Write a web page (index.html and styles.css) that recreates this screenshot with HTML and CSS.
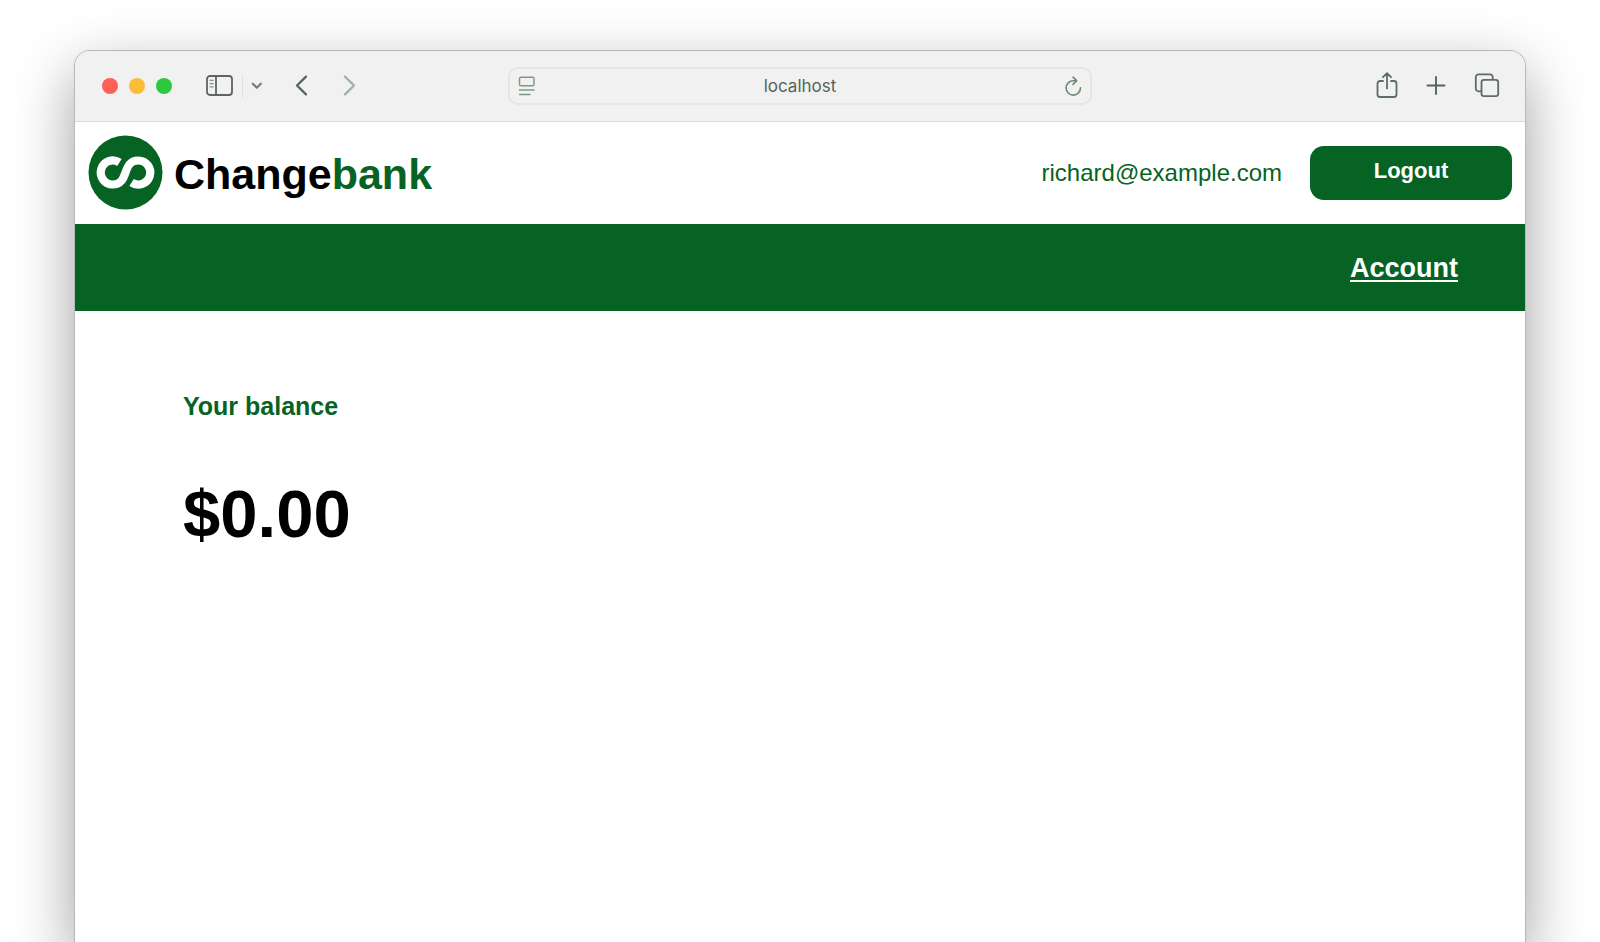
FILE: index.html
```html
<!DOCTYPE html>
<html lang="en">
<head>
<meta charset="utf-8">
<title>Changebank</title>
<meta name="viewport" content="width=device-width, initial-scale=1">
<link rel="stylesheet" href="styles.css">
</head>
<body>
<div class="browser">
  <div class="toolbar">
    <div class="toolbar-left">
      <div class="lights">
        <button class="light light-close" aria-label="Close"></button>
        <button class="light light-minimize" aria-label="Minimize"></button>
        <button class="light light-zoom" aria-label="Zoom"></button>
      </div>
      <div class="sidebar-group">
        <button class="tool" aria-label="Sidebar">
          <svg width="28" height="22" viewBox="0 0 28 22" fill="none" stroke="#5b665d" stroke-width="1.8"><rect x="1" y="1" width="25" height="19" rx="3"/><path d="M10 1v19"/><path d="M3.600 5.400h4M3.600 8.600h4M3.600 11.800h4" stroke="#7f9183" stroke-width="1.3"/></svg>
        </button>
        <span class="divider"></span>
        <button class="tool" aria-label="Sidebar menu">
          <svg width="12" height="8" viewBox="0 0 12 8" fill="none" stroke="#6f8273" stroke-width="2.200" stroke-linecap="round" stroke-linejoin="round"><path d="M1.800 1.700l4 4 4-4"/></svg>
        </button>
      </div>
      <div class="history">
        <button class="tool" aria-label="Back">
          <svg width="13" height="22" viewBox="0 0 13 22" fill="none" stroke="#56635a" stroke-width="2.200" stroke-linecap="round" stroke-linejoin="round"><path d="M11 1.600L2 10.500l9 8.900"/></svg>
        </button>
        <button class="tool" aria-label="Forward">
          <svg width="13" height="22" viewBox="0 0 13 22" fill="none" stroke="#9db3a1" stroke-width="2.200" stroke-linecap="round" stroke-linejoin="round"><path d="M2 1.600l9 8.900-9 8.900"/></svg>
        </button>
      </div>
    </div>
    <div class="address">
      <button class="tool" aria-label="Page menu">
        <svg width="18" height="20" viewBox="0 0 18 20" fill="none" stroke="#7f9884" stroke-width="1.500" stroke-linecap="round"><rect x="1.500" y="1.200" width="14.500" height="8.600" rx="1.600"/><path d="M1.500 14h14.500M1.500 18.500h10.500"/></svg>
      </button>
      <input class="address-input" type="text" value="localhost" aria-label="Address">
      <button class="tool" aria-label="Reload">
        <svg width="18" height="20" viewBox="0 0 18 20" fill="none" stroke="#6f8a75" stroke-width="1.600" stroke-linecap="round" stroke-linejoin="round"><path d="M16.500 11.800A7.200 7.200 0 1 1 9.300 4.700h3.200M9 1.200l3.700 3.500L9 8.400"/></svg>
      </button>
    </div>
    <div class="toolbar-right">
      <button class="tool" aria-label="Share">
        <svg width="22" height="28" viewBox="0 0 22 28" fill="none" stroke="#5b6e60" stroke-width="1.800" stroke-linecap="round" stroke-linejoin="round"><path d="M7 9H4a2.500 2.500 0 0 0-2.500 2.500v11A2.500 2.500 0 0 0 4 25h14a2.500 2.500 0 0 0 2.500-2.500v-11A2.500 2.500 0 0 0 18 9h-3M11 16.500v-15M7 5.200L11 1.200l4 4"/></svg>
      </button>
      <button class="tool" aria-label="New tab">
        <svg width="20" height="20" viewBox="0 0 20 20" fill="none" stroke="#56635a" stroke-width="1.900" stroke-linecap="round"><path d="M1.500 9.500h17M10 1v17"/></svg>
      </button>
      <button class="tool" aria-label="Tab overview">
        <svg width="26" height="26" viewBox="0 0 26 26" fill="none" stroke="#5b6e60" stroke-width="1.800"><path d="M7.500 18.300H4.500a2.700 2.700 0 0 1-2.700-2.800V4a2.700 2.700 0 0 1 2.700-2.700H16A2.700 2.700 0 0 1 18.700 4v2.800"/><rect x="7.500" y="6.800" width="16.700" height="16.400" rx="2.400"/></svg>
      </button>
    </div>
  </div>
  <header class="site-header">
    <a class="brand" href="#">
      <svg width="76" height="76" viewBox="0 0 76 76"><circle cx="37.500" cy="37.500" r="37" fill="#066324"/><path d="M31.400 27.500A12 12 0 1 0 24.800 49.500C41.500 49.500 33.500 25.500 50.200 25.500A12 12 0 1 1 43.600 47.500" fill="none" stroke="#fff" stroke-width="8.200"/></svg>
      <span class="brand-name">Change<span class="brand-accent">bank</span></span>
    </a>
    <div class="session">
      <span class="email">richard@example.com</span>
      <button class="logout">Logout</button>
    </div>
  </header>
  <nav class="site-nav"><a class="nav-link" href="#">Account</a></nav>
  <main class="content">
    <h2 class="balance-title">Your balance</h2>
    <p class="balance">$0.00</p>
  </main>
</div>
</body>
</html>
```
FILE: styles.css
```css
* {
  box-sizing: border-box;
}

body {
  margin: 0;
  padding: 50px 74px 0;
  min-height: 100vh;
  display: flex;
  overflow-x: hidden;
  background: #fff;
  font-family: "Liberation Sans", Arial, sans-serif;
}

button {
  padding: 0;
  border: 0;
  background: none;
  font: inherit;
}

svg {
  display: block;
}

.browser {
  flex: 1;
  display: flex;
  flex-direction: column;
  border: 1px solid #b8b8b8;
  border-bottom: 0;
  border-radius: 16px 16px 0 0;
  overflow: hidden;
  background: #fff;
  box-shadow: 0 22px 60px rgba(0, 0, 0, 0.38);
}

.toolbar {
  display: grid;
  grid-template-columns: 1fr minmax(0, 584px) 1fr;
  align-items: center;
  height: 71px;
  padding: 0 25px;
  border-bottom: 1px solid #dcdcdc;
  background: #f1f1f1;
}

.toolbar-left,
.lights,
.sidebar-group,
.history,
.toolbar-right {
  display: flex;
  align-items: center;
}

.lights {
  gap: 11px;
  margin: 0 34px 0 2px;
}

.light {
  width: 16px;
  height: 16px;
  border-radius: 50%;
}

.light-close {
  background: #fe5f58;
}

.light-minimize {
  background: #fcbc3a;
}

.light-zoom {
  background: #2bc840;
}

.sidebar-group {
  gap: 8px;
  margin-right: 32px;
}

.divider {
  width: 1px;
  height: 24px;
  background: #e0e0e0;
}

.history {
  gap: 35px;
}

.address {
  display: flex;
  align-items: center;
  height: 38px;
  padding: 0 8px;
  border: 2px solid #e5e5e5;
  border-radius: 10px;
}

.address-input {
  flex: 1;
  min-width: 0;
  padding: 0;
  border: 0;
  outline: 0;
  background: none;
  color: #56625a;
  font: 17px/20px Inter, "Liberation Sans", sans-serif;
  text-align: center;
}

.toolbar-right {
  justify-content: flex-end;
  gap: 28px;
}

.site-header {
  display: flex;
  align-items: center;
  justify-content: space-between;
  padding: 13px;
}

.brand {
  display: flex;
  align-items: center;
  gap: 10px;
  color: #000;
  text-decoration: none;
}

.brand-name {
  padding-top: 2px;
  font-size: 43px;
  font-weight: bold;
  line-height: 48px;
}

.brand-accent {
  color: #066324;
}

.session {
  display: flex;
  align-items: center;
  gap: 28px;
}

.email {
  color: #066324;
  font-size: 24px;
  line-height: 28px;
}

.logout {
  width: 202px;
  height: 54px;
  padding-bottom: 5px;
  border-radius: 14px;
  background: #066324;
  color: #fff;
  font-size: 22px;
  font-weight: bold;
}

.site-nav {
  display: flex;
  align-items: center;
  justify-content: flex-end;
  height: 87px;
  padding: 0 67px;
  background: #066324;
}

.nav-link {
  color: #fff;
  font-size: 27px;
  font-weight: bold;
  line-height: 32px;
  text-decoration-thickness: 2px;
  text-underline-offset: 3px;
  text-decoration-skip-ink: none;
}

.content {
  padding: 80px 108px;
}

.balance-title {
  margin: 0 0 53px;
  color: #066324;
  font-size: 25px;
  line-height: 30px;
}

.balance {
  margin: 0;
  font-size: 67px;
  font-weight: bold;
  line-height: 80px;
}
```
